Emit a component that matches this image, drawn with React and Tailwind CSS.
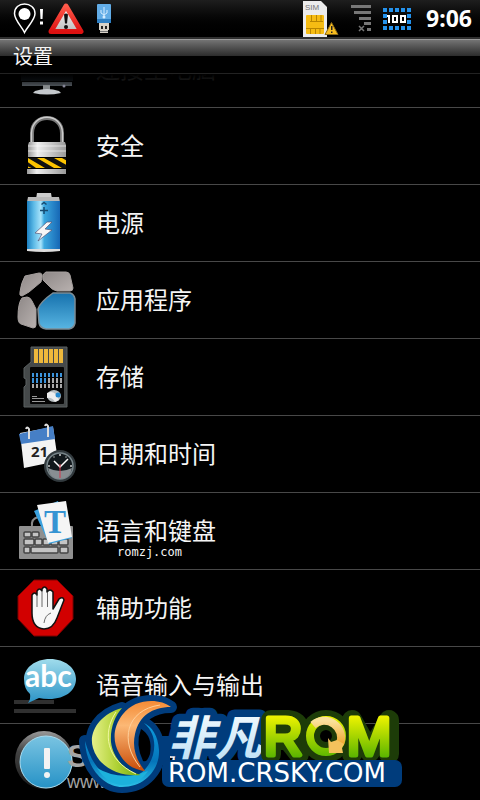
import React from "react";

function PinIcon() {
  return (
    <svg className="h-8 w-[30px]" viewBox="13 3 30 32" aria-hidden="true">
      <path d="M24.500 32.500C22 27 14.500 20 14.500 13.500C14.500 7.500 19 4 24.500 4S35 7.500 35 13.500C35 20 27 27 24.500 32.500Z" fill="#000" stroke="#fff" strokeWidth="1.500" />
      <circle cx="24.500" cy="14" r="6" fill="#fff" />
      <path d="M40 9h3l-.5 10h-2zM40 21.500h3v3h-3z" fill="#fff" />
    </svg>
  );
}

function AlertIcon() {
  return (
    <svg className="h-8 w-9" viewBox="48 2 36 32" aria-hidden="true">
      <defs>
        <linearGradient id="alertFill" x1="0" y1="0" x2="0" y2="1">
          <stop offset="0" stopColor="#fff" />
          <stop offset="1" stopColor="#bcbcbc" />
        </linearGradient>
        <linearGradient id="alertEdge" x1="0" y1="0" x2="0" y2="1">
          <stop offset="0" stopColor="#ff5a4a" />
          <stop offset="1" stopColor="#d11" />
        </linearGradient>
      </defs>
      <path d="M66 5L81 30.500H51Z" fill="url(#alertFill)" stroke="url(#alertEdge)" strokeWidth="5" strokeLinejoin="round" />
      <path d="M64 13.500q2-2 4 0l-1 9h-2z" fill="#111" />
      <circle cx="66" cy="26" r="2" fill="#111" />
    </svg>
  );
}

function UsbIcon() {
  return (
    <svg className="h-8 w-[14px]" viewBox="97 2 14 32" aria-hidden="true">
      <rect x="97" y="3" width="14" height="19" rx="1" fill="#62ace6" />
      <rect x="97" y="18" width="14" height="4" fill="#2f80c4" />
      <path d="M104 6v10M101 9v3l3 2M107 9v3l-3 2" stroke="#d5ecff" fill="none" />
      <circle cx="104" cy="16" r="1.500" fill="#d5ecff" />
      <path d="M99 22h10v7h-1v3h-8v-3h-1z" fill="#d8d2c8" />
      <path d="M101 25h2v3h-2zM105 25h2v3h-2z" fill="#222" />
      <path d="M100 30h8v1h-8z" fill="#777" />
    </svg>
  );
}

function SimIcon() {
  return (
    <svg className="h-9 w-9" viewBox="303 1 36 36" aria-hidden="true">
      <path d="M303 1h18l6 6v30h-24z" fill="#ececec" />
      <text x="305" y="10" fontFamily="Liberation Sans, Arial, sans-serif" fontSize="8" fill="#777">SIM</text>
      <rect x="306" y="15" width="18" height="19" rx="1" fill="#f6bc13" />
      <path d="M310 21.500h13M306 28.500h18M311.500 15v6M316.500 15v6M321 15v6M310.500 28v6M315.500 28v6M320 28v6" stroke="#b98500" fill="none" />
      <path d="M331.500 22.500L338 34.500h-13z" fill="#f8bd20" stroke="#8d6c18" strokeLinejoin="round" />
      <path d="M331 26h1.500v4h-1.500zM331 31.500h1.500v1.500h-1.500z" fill="#222" />
    </svg>
  );
}

function SignalIcon() {
  return (
    <svg className="h-[27px] w-5" viewBox="351 6 20 27" aria-hidden="true">
      <path d="M351 6h20v3h-20zM354 12h17v3h-17zM359 18h12v3h-12zM364 23h7v3h-7zM367 29h4v3h-4z" fill="#777" />
      <path d="M359 27l5 5M364 27l-5 5" stroke="#777" strokeWidth="1.500" />
    </svg>
  );
}

function BatteryLevelIcon() {
  const columns = [383, 389, 395, 401, 407];
  return (
    <svg className="h-[22px] w-7" viewBox="383 8 28 22" aria-hidden="true">
      <g fill="#2492ec">
        {columns.map((x) => (
          <React.Fragment key={x}>
            <rect x={x} y="8" width="4" height="4" />
            <rect x={x} y="26" width="4" height="4" />
          </React.Fragment>
        ))}
        <path d="M383 14h4v4h-4zM383 20h4v4h-4zM407 14h4v4h-4zM407 20h4v4h-4z" />
      </g>
      <path d="M387 16h2v7M393 16h4v6h-4zM401 16h4v6h-4z" fill="#000" stroke="#fff" strokeWidth="2" />
    </svg>
  );
}

function MonitorIcon() {
  return (
    <svg className="size-16 shrink-0" viewBox="14 37 64 64" aria-hidden="true">
      <path d="M21 45h52v36H21z" fill="#10151a" />
      <path d="M22 82h50v4H22z" fill="#4a5056" />
      <path d="M43 85h7v6h-7z" fill="#85898c" />
      <path d="M35 91q12-4 24 0l2 2q-14 3-28 0z" fill="#c4c8cc" />
      <circle cx="64" cy="86" r="1.500" fill="#889" />
    </svg>
  );
}

function LockIcon() {
  return (
    <svg className="size-16 shrink-0" viewBox="14 114 64 64" aria-hidden="true">
      <defs>
        <linearGradient id="lockBody" x1="0" y1="0" x2="1" y2="0">
          <stop offset="0" stopColor="#999" />
          <stop offset=".25" stopColor="#eee" />
          <stop offset=".6" stopColor="#c8c8c8" />
          <stop offset="1" stopColor="#999" />
        </linearGradient>
        <clipPath id="lockBand"><path d="M28 158h38v10H28z" /></clipPath>
      </defs>
      <path d="M32 143v-10C32 113 62 113 62 133v10" fill="none" stroke="#777" strokeWidth="4" />
      <path d="M31.500 143v-10C32 112 62 112 62.500 133v10" fill="none" stroke="#ccc" strokeWidth="1.500" />
      <path d="M29 142h36l1 3v12H28v-12z" fill="url(#lockBody)" />
      <path d="M28 146h38M28 151h38" stroke="#fff" strokeOpacity=".6" />
      <path d="M28 158h38v10H28z" fill="#111" />
      <g clipPath="url(#lockBand)" fill="#fdc400">
        <path d="M22 158h6l17 10h-9zM37 158h7l18 10h-8zM54 158h8l18 10h-8zM18 162l16 7H20z" />
      </g>
      <path d="M27 169h39v5H27z" fill="url(#lockBody)" />
    </svg>
  );
}

function PowerIcon() {
  return (
    <svg className="size-16 shrink-0" viewBox="14 191 64 64" aria-hidden="true">
      <defs>
        <linearGradient id="cellBody" x1="0" y1="0" x2="1" y2="0">
          <stop offset="0" stopColor="#1b7fc0" />
          <stop offset=".2" stopColor="#5bb9e6" />
          <stop offset=".42" stopColor="#a9e4fb" />
          <stop offset=".52" stopColor="#3da9df" />
          <stop offset="1" stopColor="#1667b5" />
        </linearGradient>
      </defs>
      <path d="M37 193h14l1 6H36z" fill="#ccc" />
      <path d="M28 197h31l1 5H27z" fill="#b9b9b9" />
      <path d="M27 201h33v49H27z" fill="url(#cellBody)" />
      <path d="M27 249h33v2q-16 2-33 0z" fill="#ddd" />
      <path d="M40 210.500h8M44 207v7M41.500 204.500l2.500-2 2.500 2" stroke="#164a70" strokeWidth="1.500" fill="none" />
      <path d="M47 222l-12 11 7 1-4 7 14-11-7-1 7-7z" fill="#f6f6f6" stroke="#557" strokeWidth=".7" />
    </svg>
  );
}

function AppsIcon() {
  return (
    <svg className="size-16 shrink-0" viewBox="14 268 64 64" aria-hidden="true">
      <defs>
        <linearGradient id="tileGray" x1="0" y1="0" x2="1" y2="1">
          <stop offset="0" stopColor="#8e8887" />
          <stop offset="1" stopColor="#b8b1af" />
        </linearGradient>
        <linearGradient id="tileBlue" x1="0" y1="0" x2="0" y2="1">
          <stop offset="0" stopColor="#1671ad" />
          <stop offset="1" stopColor="#58b5e2" />
        </linearGradient>
      </defs>
      <g fill="url(#tileGray)" stroke="#a59f9d" strokeWidth="1" strokeLinejoin="round">
        <path d="M25 276l14-3q4 0 3 4l-1 5-12 10-7 4q-3 0-2-4 1-9 5-16z" />
        <path d="M46 272h20q3 0 4 3l3 13q0 3-3 3H57q-5-1-8-5l-6-6q-1-6 3-8z" />
        <path d="M22 298l5-1q3 0 5 4l4 8v16q0 3-3 3l-12-4q-3-1-3-7 0-14 4-19z" />
      </g>
      <path d="M53 293h17q4 1 5 6v24q-1 5-6 6H46q-6-1-7-6l-1-14q2-7 15-16z" fill="url(#tileBlue)" stroke="#7c8c95" strokeWidth="1.500" />
    </svg>
  );
}

function StorageIcon() {
  const contacts = [34, 39, 44, 49, 54, 59];
  const columns = [32, 36, 40, 44, 48, 52, 56, 60];
  return (
    <svg className="size-16 shrink-0" viewBox="14 345 64 64" aria-hidden="true">
      <path d="M31 347h36v60H24v-20l2-2v-6l-2-1v-10l7-6z" fill="#45494a" stroke="#5b6061" />
      {contacts.map((x) => (
        <path key={x} d={`M${x} 349h4v14h-4z`} fill="#edb83c" />
      ))}
      <rect x="30" y="367" width="34" height="37" rx="1" fill="#050505" />
      {columns.map((x, i) => (
        <g key={x}>
          <path d={`M${x} 373h2v4h-2z`} fill="#3c94dc" />
          <path d={`M${x} 378h2v5h-2z`} fill={i < 4 ? "#3c94dc" : "#aaa"} />
          <path d={`M${x} 384h2v4h-2z`} fill="#aaa" />
        </g>
      ))}
      <path d="M32 396.500h5M32 398.500h12M32 401.500h13" stroke="#999" />
      <ellipse cx="54" cy="396" rx="7" ry="6" fill="#b8bfc2" />
      <path d="M47 393q8-4 12 7l-4 2q-3-5-8-4z" fill="#eee" />
      <circle cx="58" cy="395" r="2.500" fill="#2689ce" />
    </svg>
  );
}

function DateIcon() {
  return (
    <svg className="size-16 shrink-0" viewBox="14 422 64 64" aria-hidden="true">
      <path d="M20 433l33-6 5 34-34 7z" fill="#f3f3f3" />
      <path d="M19 434l34-8 2 13-34 5z" fill="#467fc6" />
      <path d="M29 439v-10q-2-3-3 0M48 437v-11q-2-3-3 0" fill="none" stroke="#ddd" strokeWidth="2" />
      <text x="31" y="457" fontFamily="Open Sans, sans-serif" fontWeight="700" fontSize="15" fill="#222">21</text>
      <circle cx="60" cy="466" r="16" fill="#323a3e" />
      <circle cx="60" cy="466" r="13" fill="#12191d" stroke="#78858a" strokeWidth="1.500" />
      <path d="M48 468q12 6 24 0q-2 11-12 11t-12-11z" fill="#888e92" />
      <g fill="#ccc">
        <circle cx="60" cy="455" r="1" /><circle cx="71" cy="466" r="1" /><circle cx="49" cy="466" r="1" />
        <circle cx="54" cy="457" r=".7" /><circle cx="66" cy="457" r=".7" />
      </g>
      <path d="M54 461l6 6 8-8" stroke="#fff" strokeWidth="1.500" fill="none" />
      <path d="M60 464v14" stroke="#d33a4e" />
    </svg>
  );
}

function KeyboardIcon() {
  return (
    <svg className="size-16 shrink-0" viewBox="14 499 64 64" aria-hidden="true">
      <path d="M32 526q-1-7 6-9" fill="none" stroke="#888" strokeWidth="2" />
      <rect x="19" y="526" width="54" height="33" rx="1" fill="#909090" />
      <g fill="#c4c4c4" stroke="#444" strokeWidth="1.500">
        <rect x="24" y="532" width="7" height="5" rx="1" /><rect x="32" y="532" width="7" height="5" rx="1" />
        <rect x="24" y="539" width="10" height="6" rx="1" /><rect x="35" y="539" width="7" height="6" rx="1" />
        <rect x="43" y="539" width="7" height="6" rx="1" /><rect x="51" y="539" width="7" height="6" rx="1" />
        <rect x="59" y="539" width="9" height="6" rx="1" /><rect x="24" y="547" width="6" height="6" rx="1" />
        <rect x="31" y="547" width="27" height="6" rx="1" /><rect x="60" y="547" width="8" height="6" rx="1" />
      </g>
      <path d="M34 511l24-10 14 37-23 6z" fill="#3ba2df" />
      <path d="M37 505l29-4 6 36-24 6z" fill="#f5f5f5" />
      <text x="44" y="533" fontFamily="Liberation Serif, Times New Roman, serif" fontWeight="700" fontSize="33" fill="#3594d3">T</text>
    </svg>
  );
}

function HandIcon() {
  return (
    <svg className="size-16 shrink-0" viewBox="14 576 64 64" aria-hidden="true">
      <path d="M34 580h23l16 16v23l-16 17H34l-16-17v-23z" fill="#d20000" stroke="#7d0000" strokeWidth="1" />
      <path d="M32 613V595q2.500-4 5 0v-4q2.500-4 5 0v-2q2.500-4 5 0v3q3-4 6 0v17l6-10q4-3 5 1l-7 18q-4 11-13 11-12-1-12-16z" fill="#f7f7f7" stroke="#111" strokeWidth="1.500" strokeLinejoin="round" />
      <path d="M37 594v13M42 592v15M47.500 592v15M44 623q1-8 7-10" stroke="#444" strokeWidth=".8" fill="none" />
    </svg>
  );
}

function SpeechIcon() {
  return (
    <svg className="size-16 shrink-0" viewBox="14 653 64 64" aria-hidden="true">
      <defs>
        <linearGradient id="bubble" x1="0" y1="0" x2="0" y2="1">
          <stop offset="0" stopColor="#a0dcec" />
          <stop offset="1" stopColor="#2b93c6" />
        </linearGradient>
      </defs>
      <path d="M14 700h40v4H14zM14 709h62v4H14z" fill="#303030" />
      <path d="M50 659c15 0 26 9 26 20s-10 20-27 20q-6 0-10-1l-11 5q3-4 2-9-6-5-6-15c0-11 11-20 26-20z" fill="url(#bubble)" />
      <text x="25" y="687" fontFamily="Lato, sans-serif" fontWeight="700" fontSize="30" fill="#fff">abc</text>
    </svg>
  );
}

function AboutIcon() {
  return (
    <svg className="size-16 shrink-0" viewBox="14 730 64 64" aria-hidden="true">
      <defs>
        <linearGradient id="aboutRing" x1="0" y1="0" x2="0" y2="1">
          <stop offset="0" stopColor="#999" />
          <stop offset=".35" stopColor="#444" />
          <stop offset="1" stopColor="#181818" />
        </linearGradient>
        <linearGradient id="aboutDisc" x1="0" y1="0" x2="0" y2="1">
          <stop offset="0" stopColor="#7ac4e2" />
          <stop offset="1" stopColor="#2692c6" />
        </linearGradient>
      </defs>
      <circle cx="44" cy="760" r="29" fill="url(#aboutRing)" />
      <circle cx="46" cy="762" r="26" fill="url(#aboutDisc)" stroke="#a9dcf0" strokeWidth="1" />
      <rect x="44" y="748" width="6" height="21" rx="1" fill="#f3f3f3" />
      <circle cx="47" cy="775" r="3" fill="#f3f3f3" />
    </svg>
  );
}

function SwirlLogo() {
  const green = "M122 708C100 714 88 732 93 748C99 768 120 777 141 775C124 770 113 758 111 742C110 728 115 716 122 708Z";
  const orange = "M171 707C160 698 135 698 123 714C112 728 113 742 119 753C125 765 135 770 145 771C136 760 132 748 135 734C139 716 152 707 171 707Z";
  const ring = "M85 741C86 768 104 787 122 787C146 787 160 768 159 750C158 735 152 727 144 723C154 732 156 743 153 755C149 768 139 779 122 779C104 779 92 766 85 741Z";
  return (
    <svg className="pointer-events-none absolute bottom-0 left-[78px] h-[108px] w-[330px]" viewBox="78 692 330 108" role="img" aria-label="非凡ROM ROM.CRSKY.COM">
      <defs>
        <linearGradient id="swirlGreen" x1="0" y1="0" x2="1" y2="0">
          <stop offset="0" stopColor="#e5f08a" />
          <stop offset=".5" stopColor="#b0d235" />
          <stop offset="1" stopColor="#6da711" />
        </linearGradient>
        <linearGradient id="swirlOrange" x1="0" y1="0" x2="0" y2="1">
          <stop offset="0" stopColor="#f48b35" />
          <stop offset=".35" stopColor="#fcb875" />
          <stop offset="1" stopColor="#c94c08" />
        </linearGradient>
        <linearGradient id="swirlBlue" x1="0" y1="0" x2="0" y2="1">
          <stop offset="0" stopColor="#0d9ddf" />
          <stop offset=".6" stopColor="#0575ba" />
          <stop offset="1" stopColor="#2bc0e6" />
        </linearGradient>
        <linearGradient id="nameFill" x1="0" y1="0" x2="0" y2="1">
          <stop offset="0" stopColor="#fff" />
          <stop offset="1" stopColor="#b7def5" />
        </linearGradient>
        <linearGradient id="romFill" gradientUnits="userSpaceOnUse" x1="0" y1="715" x2="0" y2="758">
          <stop offset="0" stopColor="#f2f500" />
          <stop offset="1" stopColor="#58b400" />
        </linearGradient>
        <linearGradient id="arrowFill" x1="0" y1="0" x2="0" y2="1">
          <stop offset="0" stopColor="#fbe29c" />
          <stop offset="1" stopColor="#efa832" />
        </linearGradient>
      </defs>

      <g fill="#003c7c" stroke="#003c7c" strokeWidth="12" strokeLinejoin="round">
        <path d={ring} />
        <path d={green} />
        <path d={orange} />
      </g>
      <path d="M88 740Q92 777 124 780L140 776 112 710Z" fill="#003c7c" />
      <path d="M158 736h12v28h-12z" fill="#003c7c" />
      <path d="M141 729Q153 736 150 754 147 763 143 761 135 744 141 729Z" fill="#000" />
      <path d={ring} fill="url(#swirlBlue)" />
      <path d="M97 768q24 14 51 3-9 14-26 14-15-1-25-17z" fill="#1cb2dc" />
      <path d={green} fill="url(#swirlGreen)" />
      <path d={orange} fill="url(#swirlOrange)" />
      <path d="M116 712c-14 21-10 48 20 62" fill="none" stroke="#f0f7a2" />
      <path d="M160 705c-34 5-41 36-20 62" fill="none" stroke="#ffd09b" />

      <text x="168" y="755" fontFamily="Noto Sans CJK SC, sans-serif" fontWeight="700" fontStyle="italic" fontSize="47" strokeLinejoin="round" fill="url(#nameFill)" stroke="#003c7c" strokeWidth="15" paintOrder="stroke">非凡</text>

      <g fill="none" stroke="#1d3c08" strokeWidth="20" strokeLinejoin="round" strokeLinecap="round">
        <path d="M271 754V720H288Q299 721 299 730 299 739 288 740H271M288 740L299 754" />
        <circle cx="326" cy="736" r="16" />
        <path d="M352 754V720L370 752 389 720V754" />
      </g>
      <rect x="162" y="760" width="240" height="27" rx="7" fill="#003c7c" />
      <g fontFamily="Liberation Sans, Arial, sans-serif" stroke="url(#romFill)" strokeWidth="5" strokeLinejoin="round" fill="url(#romFill)">
        <text x="264" y="755" fontSize="53">R</text>
        <text x="347" y="755" fontSize="53">M</text>
      </g>
      <circle cx="326" cy="736" r="16" fill="none" stroke="url(#romFill)" strokeWidth="8" />
      <path d="M313 725A17 17 0 0 1 340 744" fill="none" stroke="url(#arrowFill)" strokeWidth="8" />
      <path d="M328 738l3 4 6-2 7 4-2 4 1 5h-14z" fill="#f4c25c" />

      <text x="168" y="782" fontFamily="DejaVu Sans, Verdana, sans-serif" fontSize="26" fill="#fff">ROM.CRSKY.COM</text>
    </svg>
  );
}

const items = [
  { label: "安全", Icon: LockIcon },
  { label: "电源", Icon: PowerIcon },
  { label: "应用程序", Icon: AppsIcon },
  { label: "存储", Icon: StorageIcon },
  { label: "日期和时间", Icon: DateIcon },
  { label: "语言和键盘", Icon: KeyboardIcon, note: "romzj.com" },
  { label: "辅助功能", Icon: HandIcon },
  { label: "语音输入与输出", Icon: SpeechIcon },
  { label: "关于手机", Icon: AboutIcon },
];

function SettingRow({ label, Icon, note, dim }) {
  return (
    <li className="relative h-[77px] border-b border-[#484848]">
      <button type="button" className="flex h-full w-full items-center gap-[18px] pl-[14px] text-left text-2xl">
        <Icon />
        <span className={dim ? "text-[#2c2c2c]" : ""}>{label}</span>
      </button>
      {note && (
        <span className="absolute bottom-[9px] left-[117px] font-['DejaVu_Sans_Mono',monospace] text-xs leading-4">{note}</span>
      )}
    </li>
  );
}

export default function App() {
  return (
    <div className="relative flex h-screen flex-col overflow-hidden bg-black font-['Noto_Sans','Noto_Sans_CJK_SC',sans-serif] text-[#f5f5f5]">
      <header className="flex h-[39px] shrink-0 items-center justify-between border-b-2 border-[#303030] bg-linear-to-b from-[#1e1e1e] to-black pr-2 pl-[13px]">
        <div className="flex items-center">
          <PinIcon />
          <div className="flex items-center gap-[13px] pl-[5px]">
            <AlertIcon />
            <UsbIcon />
          </div>
        </div>
        <div className="flex items-center gap-3">
          <SimIcon />
          <SignalIcon />
          <BatteryLevelIcon />
          <time className="pl-[3px] text-[23px] font-bold text-white">9:06</time>
        </div>
      </header>

      <div className="h-[35px] shrink-0 border-t border-b border-t-[#999] border-b-[#222] bg-linear-to-b from-[#747474] from-0% via-[#2a2a2a] via-50% to-black to-50% pl-[13px]">
        <h1 className="text-xl leading-[33px]">设置</h1>
      </div>

      <main className="relative min-h-0 flex-1 overflow-hidden">
        <ul className="-mt-[43px]">
          <SettingRow label="连接至电脑" Icon={MonitorIcon} dim />
          {items.map((item) => (
            <SettingRow key={item.label} {...item} />
          ))}
        </ul>
        <div className="pointer-events-none absolute inset-x-0 top-0 h-3 bg-linear-to-b from-black to-transparent" />
        <div className="pointer-events-none absolute bottom-2 left-[67px] flex flex-col font-['Liberation_Sans',Arial,sans-serif] text-[#a5a5a5]">
          <span className="text-[32px] leading-8 font-bold">S</span>
          <span className="text-lg leading-5">www.</span>
        </div>
      </main>
      <SwirlLogo />
    </div>
  );
}
